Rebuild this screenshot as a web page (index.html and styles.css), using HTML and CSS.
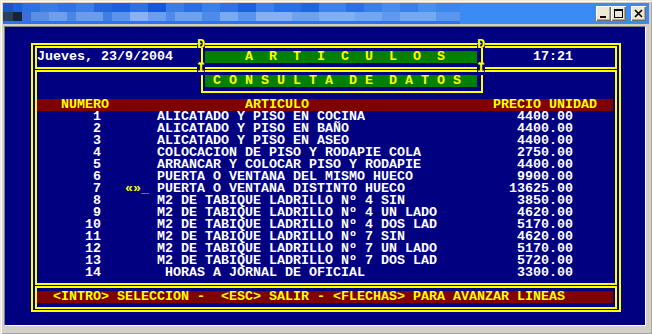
FILE: index.html
```html
<!DOCTYPE html>
<html lang="es">
<head>
<meta charset="utf-8">
<title>Consulta de datos - Articulos</title>
<link rel="stylesheet" href="styles.css">
</head>
<body>
<div class="window">
  <div class="titlebar">
    <div class="title-mosaic">
      <div class="mosaic-row r1"></div>
      <div class="mosaic-row r2"></div>
    </div>
    <div class="buttons">
      <span class="btn btn-min"><svg width="15" height="15" viewBox="0 0 15 15"><rect x="4" y="10" width="6" height="2" fill="#000"/></svg></span>
      <span class="btn btn-max"><svg width="15" height="15" viewBox="0 0 15 15"><rect x="3.5" y="3.5" width="8" height="8" fill="none" stroke="#000"/><rect x="3" y="3" width="9" height="2" fill="#000"/></svg></span>
      <span class="btn btn-close"><svg width="15" height="15" viewBox="0 0 15 15"><path d="M4 4 L11 11 M11 4 L4 11" stroke="#000" stroke-width="1.7" fill="none"/></svg></span>
    </div>
  </div>
  <div class="client">
    <div class="screen">
      <div class="frame frame-outer"></div>
      <div class="frame box-head"></div>
      <div class="frame box-body"></div>
      <div class="frame box-foot"></div>
      <div class="title-box"></div>

      <div class="date">Jueves, 23/9/2004</div>
      <div class="time">17:21</div>
      <div class="banner banner-1">A  R  T  I  C  U  L  O  S</div>
      <div class="banner banner-2">C O N S U L T A  D E  D A T O S</div>

      <div class="junction j-top j-left">Ð</div>
      <div class="junction j-top j-right">Ð</div>
      <div class="junction j-mid j-left">Ï</div>
      <div class="junction j-mid j-right">Ï</div>

      <div class="thead"><span class="h-num">NUMERO</span><span class="h-art">ARTICULO</span><span class="h-price">PRECIO UNIDAD</span></div>

      <div class="rows">
        <span class="num">1</span><span class="mark"></span><span class="art">ALICATADO Y PISO EN COCINA</span><span class="price">4400.00</span>
        <span class="num">2</span><span class="mark"></span><span class="art">ALICATADO Y PISO EN BAÑO</span><span class="price">4400.00</span>
        <span class="num">3</span><span class="mark"></span><span class="art">ALICATADO Y PISO EN ASEO</span><span class="price">4400.00</span>
        <span class="num">4</span><span class="mark"></span><span class="art">COLOCACION DE PISO Y RODAPIE COLA</span><span class="price">2750.00</span>
        <span class="num">5</span><span class="mark"></span><span class="art">ARRANCAR Y COLOCAR PISO Y RODAPIE</span><span class="price">4400.00</span>
        <span class="num">6</span><span class="mark"></span><span class="art">PUERTA O VENTANA DEL MISMO HUECO</span><span class="price">9900.00</span>
        <span class="num">7</span><span class="mark"><span class="sel">«»</span><span class="cursor">_</span></span><span class="art">PUERTA O VENTANA DISTINTO HUECO</span><span class="price">13625.00</span>
        <span class="num">8</span><span class="mark"></span><span class="art">M2 DE TABIQUE LADRILLO Nº 4 SIN</span><span class="price">3850.00</span>
        <span class="num">9</span><span class="mark"></span><span class="art">M2 DE TABIQUE LADRILLO Nº 4 UN LADO</span><span class="price">4620.00</span>
        <span class="num">10</span><span class="mark"></span><span class="art">M2 DE TABIQUE LADRILLO Nº 4 DOS LAD</span><span class="price">5170.00</span>
        <span class="num">11</span><span class="mark"></span><span class="art">M2 DE TABIQUE LADRILLO Nº 7 SIN</span><span class="price">4620.00</span>
        <span class="num">12</span><span class="mark"></span><span class="art">M2 DE TABIQUE LADRILLO Nº 7 UN LADO</span><span class="price">5170.00</span>
        <span class="num">13</span><span class="mark"></span><span class="art">M2 DE TABIQUE LADRILLO Nº 7 DOS LAD</span><span class="price">5720.00</span>
        <span class="num">14</span><span class="mark"></span><span class="art"> HORAS A JORNAL DE OFICIAL</span><span class="price">3300.00</span>
      </div>

      <div class="footer">&lt;INTRO&gt; SELECCION -  &lt;ESC&gt; SALIR - &lt;FLECHAS&gt; PARA AVANZAR LINEAS</div>
    </div>
  </div>
</div>
</body>
</html>
```

FILE: styles.css
```css
* { box-sizing: border-box; }
html, body { margin: 0; padding: 0; }
body {
  width: 652px;
  height: 334px;
  overflow: hidden;
  background: #D4D0C8;
  font-family: "Liberation Sans", sans-serif;
}

.window {
  width: 652px;
  height: 334px;
  padding: 3px;
  background: #D4D0C8;
  box-shadow: inset 1px 1px 0 #ECE9D8, inset 2px 2px 0 #FFFFFF, inset -1px -1px 0 #A7A59D;
  display: flex;
  flex-direction: column;
}

/* ---------- title bar ---------- */
.titlebar {
  height: 21px;
  display: flex;
  background: #3A8CF4;
}
.title-mosaic {
  width: 457px;
  height: 21px;
  background: #2A74EC;
}
.mosaic-row { height: 9px; }
.r1 {
  background: linear-gradient(to right,
    #1B56C6 0 10px, #1F63DA 10px 19px, #2C70E2 19px 37px, #3B7BE6 37px 55px,
    #2F73E4 55px 73px, #3C7DE8 73px 91px, #2566DE 91px 109px, #1A5FE0 109px 127px,
    #2E71E4 127px 145px, #1257DC 145px 163px, #3A7DE9 163px 181px, #2A6EE6 181px 199px,
    #3B80EA 199px 217px, #2E72E6 217px 235px, #1C61E0 235px 253px, #3B80EA 253px 271px,
    #2870E6 271px 298px, #1F67E2 298px 316px, #3C82EC 316px 343px, #2B71E6 343px 361px,
    #3A80EA 361px 379px, #4A8CEE 379px 397px, #3A80EA 397px 415px, #4890EE 415px 433px,
    #3D86EC 433px 457px);
}
.r2 {
  background: linear-gradient(to right,
    #2B3E63 0 10px, #172338 10px 19px, #3A70D8 19px 28px, #5A8FE4 28px 46px,
    #6E9FEA 46px 64px, #4A86E4 64px 73px, #6A9CEA 73px 100px, #3F7EE6 100px 109px,
    #5C94EC 109px 127px, #8AB2F2 127px 145px, #6B9EEE 145px 163px, #4F8AE8 163px 172px,
    #6FA2EE 172px 199px, #4D8AEA 199px 217px, #7AAAF0 217px 235px, #5A94EC 235px 253px,
    #86B0F2 253px 289px, #6EA2EE 289px 316px, #80AEF2 316px 352px, #72A6F0 352px 379px,
    #5F98EE 379px 397px, #74A8F0 397px 433px, #5A96EE 433px 457px);
}

.buttons {
  margin-left: auto;
  margin-right: 3px;
  padding-top: 3px;
  display: flex;
  align-items: flex-start;
}
.btn {
  display: block;
  width: 15px;
  height: 15px;
  background: #ECE9D8;
  box-shadow: inset 1px 1px 0 #FFFFFF, inset -1px -1px 0 #716F64, inset -2px -2px 0 #ACA899;
}
.btn svg { display: block; }
.btn-close { margin-left: 5px; }

/* ---------- console client ---------- */
.client {
  margin: 2px 3px 0 1px;
  width: 642px;
  height: 300px;
  border: 1px solid;
  border-color: #808080 #FFFFFF #FFFFFF #808080;
  overflow: hidden;
}
.screen {
  width: 640px;
  height: 300px;
  background: #000080;
  display: grid;
  grid-template-columns: repeat(80, 8px);
  grid-template-rows: repeat(25, 12px);
  font-family: "Liberation Mono", "DejaVu Sans Mono", monospace;
  font-weight: bold;
  font-size: 13.333px;
  line-height: 12px;
  color: #FFFFFF;
  white-space: pre;
}

/* box drawing */
.frame { border: 2px solid #FFFF00; }
.frame-outer { grid-column: 4 / 78; grid-row: 2 / 25; margin: 4px 0 3px 2px; }
.box-head { grid-column: 4 / 78; grid-row: 2 / 5; margin: 7px 4px 6px 6px; }
.box-body { grid-column: 4 / 78; grid-row: 4 / 23; margin: 7px 4px 6px 6px; }
.box-foot { grid-column: 4 / 78; grid-row: 22 / 25; margin: 7px 4px 6px 6px; }
.title-box {
  grid-column: 25 / 61;
  grid-row: 2 / 7;
  margin: 9px 2px 6px 4px;
  border: 2px solid #FFFF00;
  border-top: 0;
}

.junction {
  color: #FFFF00;
  text-align: center;
}
.j-left { grid-column: 25; }
.j-right { grid-column: 60; }
.j-top { grid-row: 2; background: linear-gradient(#000080 0 9px, transparent 9px); }
.j-mid { grid-row: 4; background: #000080; }

.date { grid-column: 5 / span 20; grid-row: 3; }
.time { grid-column: 67 / span 5; grid-row: 3; }

.banner {
  grid-column: 26 / 60;
  background: #008000;
  color: #FFFF00;
}
.banner-1 { grid-row: 3; padding-left: 40px; }
.banner-2 { grid-row: 5; padding-left: 8px; }

.thead {
  grid-column: 5 / 77;
  grid-row: 7;
  background: #800000;
  color: #FFFF00;
  display: flex;
}
.h-num { margin-left: 24px; }
.h-art { margin-left: 136px; }
.h-price { margin-left: 184px; }

.rows {
  grid-column: 5 / 77;
  grid-row: 8 / 22;
  display: grid;
  grid-template-columns: 64px 56px 352px 64px;
  grid-auto-rows: 12px;
}
.num { text-align: right; }
.mark { padding-left: 24px; }
.sel { color: #FFFF00; }
.cursor { color: #C0C040; }
.price { text-align: right; }

.footer {
  grid-column: 5 / 77;
  grid-row: 23;
  background: #800000;
  color: #FFFF00;
  padding-left: 16px;
}
```
